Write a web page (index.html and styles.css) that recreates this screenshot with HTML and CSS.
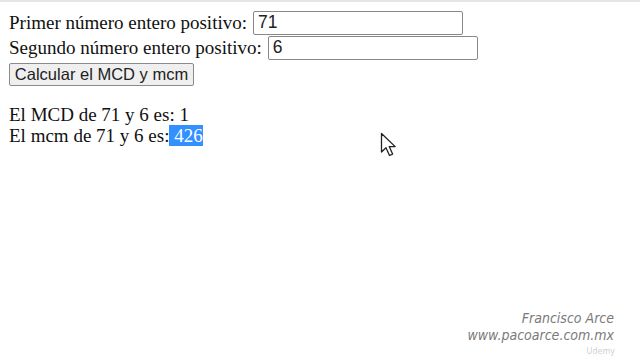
FILE: index.html
```html
<!DOCTYPE html>
<html lang="es">
<head>
<meta charset="utf-8">
<link rel="stylesheet" href="styles.css">
</head>
<body>
<div class="topbar"></div>
<main class="page">
  <div class="row"><span class="label">Primer número entero positivo:</span><input class="field" type="text" value="71"></div>
  <div class="row"><span class="label">Segundo número entero positivo:</span><input class="field" type="text" value="6"></div>
  <div class="row btnrow"><button class="btn">Calcular el MCD y mcm</button></div>
  <div class="results">
    <div class="line">El MCD de 71 y 6 es: 1</div>
    <div class="line">El mcm de 71 y 6 es:<span class="sel">&nbsp;426</span></div>
  </div>
</main>
<svg class="cursor" width="20" height="28" viewBox="0 0 20 28">
  <path d="M1.5 1.5 L1.5 20 L6 15.8 L9.5 23.5 L12.6 22.1 L9.2 14.6 L15.2 14.6 Z" fill="#fff" stroke="#222" stroke-width="1.3" stroke-linejoin="round"/>
</svg>
<div class="credit">
  <div>Francisco Arce</div>
  <div>www.pacoarce.com.mx</div>
</div>
<div class="udemy">Udemy</div>
</body>
</html>
```
FILE: styles.css
```css
html, body { margin: 0; padding: 0; background: #fff; width: 640px; height: 360px; overflow: hidden; }
body { position: relative; font-family: "Liberation Serif", "Times New Roman", serif; color: #111; }
.topbar { height: 2px; background: #e6e6e6; }
.page { padding: 8px 0 0 9px; font-size: 19px; }
.row { display: flex; align-items: center; height: 25px; }
.label { margin-right: 6px; white-space: nowrap; }
.field { box-sizing: border-box; width: 210px; height: 24px; border: 1px solid #888; border-radius: 2px; padding: 0 4px; font-family: "Liberation Sans", Arial, sans-serif; font-size: 17.5px; color: #222; margin: 0; }
.btnrow { height: 26px; margin-top: 1px; }
.btn { box-sizing: border-box; width: 185px; height: 23px; margin: 0; padding: 0; border: 1px solid #8a8a8a; border-radius: 2px; background: #efefef; font-family: "Liberation Sans", Arial, sans-serif; font-size: 16.5px; color: #222; }
.results { margin-top: 17px; line-height: 21px; }
.line { white-space: nowrap; }
.sel { background: #3390ff; color: #fff; }
.cursor { position: absolute; left: 380px; top: 132px; }
.credit { position: absolute; right: 26px; top: 310px; text-align: right; font-family: "DejaVu Sans Condensed", "DejaVu Sans", sans-serif; font-stretch: condensed; font-style: italic; font-size: 14px; line-height: 17px; color: #7a7a7a; }
.udemy { position: absolute; right: 25px; top: 347px; font-family: "DejaVu Sans", sans-serif; font-size: 8px; color: #d0d0d0; }
```
